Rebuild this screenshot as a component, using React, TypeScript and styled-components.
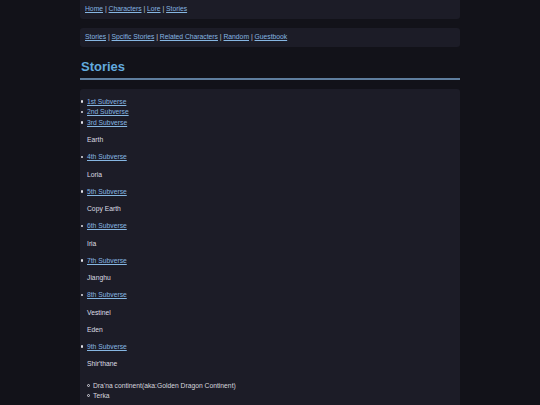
import styled, { createGlobalStyle } from "styled-components";

const GlobalStyle = createGlobalStyle`
  html, body {
    margin: 0;
    padding: 0;
    background: #121219;
    color: #d6d6de;
    font-family: "Liberation Sans", Arial, sans-serif;
  }
`;

const Page = styled.div`
  width: 380px;
  margin: 0 auto;
  font-size: 6.75px;
  line-height: 10.5px;
`;

const NavBar = styled.nav<{ $gap?: number }>`
  margin-top: ${(p) => p.$gap ?? 0}px;
  padding: 4.25px 5px;
  background: #1c1c27;
  border-radius: ${(p) => (p.$gap ? "3px" : "0 0 3px 3px")};
  color: #c8c8d0;
`;

const Link = styled.a`
  color: #86b6e2;
  text-decoration: underline;
`;

const Title = styled.h1`
  margin: 12px 0 0;
  padding: 0 0 4px 1px;
  font-size: 13px;
  line-height: 15px;
  font-weight: bold;
  color: #62aadf;
  border-bottom: 2px solid #5f7e9e;
`;

const Panel = styled.section`
  margin-top: 9px;
  padding: 7.8px 7px 20px;
  background: #1c1c27;
  border-radius: 3px 3px 0 0;
`;

const List = styled.ul<{ $circle?: boolean; $top?: number }>`
  margin: ${(p) => p.$top ?? 6.75}px 0 6.75px;
  padding-left: ${(p) => (p.$circle ? "6px" : "0")};
  list-style: none;
`;

const Item = styled.li<{ $circle?: boolean }>`
  &::before {
    content: "";
    display: inline-block;
    box-sizing: border-box;
    width: ${(p) => (p.$circle ? "3px" : "2.4px")};
    height: ${(p) => (p.$circle ? "3px" : "2.4px")};
    margin-left: -6px;
    margin-right: ${(p) => (p.$circle ? "3px" : "3.6px")};
    vertical-align: 1.3px;
    border-radius: 50%;
    background: ${(p) => (p.$circle ? "transparent" : "#e0e0e8")};
    border: ${(p) => (p.$circle ? "0.8px solid #d0d0d8" : "none")};
  }
`;

const Para = styled.p`
  margin: 6.75px 0;
  color: #dcdce4;
`;

function Nav({ items, gap }: { items: string[]; gap?: number }) {
  return (
    <NavBar $gap={gap}>
      {items.map((item, i) => (
        <span key={item}>
          {i > 0 && " | "}
          <Link href="#">{item}</Link>
        </span>
      ))}
    </NavBar>
  );
}

type Block = { link?: string[]; text?: string };

const blocks: Block[] = [
  { link: ["1st Subverse", "2nd Subverse", "3rd Subverse"] },
  { text: "Earth" },
  { link: ["4th Subverse"] },
  { text: "Loria" },
  { link: ["5th Subverse"] },
  { text: "Copy Earth" },
  { link: ["6th Subverse"] },
  { text: "Iria" },
  { link: ["7th Subverse"] },
  { text: "Jianghu" },
  { link: ["8th Subverse"] },
  { text: "Vestinel" },
  { text: "Eden" },
  { link: ["9th Subverse"] },
  { text: "Shir'thane" },
];

export default function App() {
  return (
    <>
      <GlobalStyle />
      <Page>
        <Nav items={["Home", "Characters", "Lore", "Stories"]} />
        <Nav
          gap={9}
          items={["Stories", "Spcific Stories", "Related Characters", "Random", "Guestbook"]}
        />
        <Title>Stories</Title>
        <Panel>
          {blocks.map((b, i) =>
            b.link ? (
              <List key={i} $top={i === 0 ? 0 : undefined}>
                {b.link.map((l) => (
                  <Item key={l}>
                    <Link href="#">{l}</Link>
                  </Item>
                ))}
              </List>
            ) : (
              <Para key={i}>{b.text}</Para>
            )
          )}
          <List $circle $top={11}>
            <Item $circle>Dra'na continent(aka:Golden Dragon Continent)</Item>
            <Item $circle>Terka</Item>
          </List>
        </Panel>
      </Page>
    </>
  );
}
